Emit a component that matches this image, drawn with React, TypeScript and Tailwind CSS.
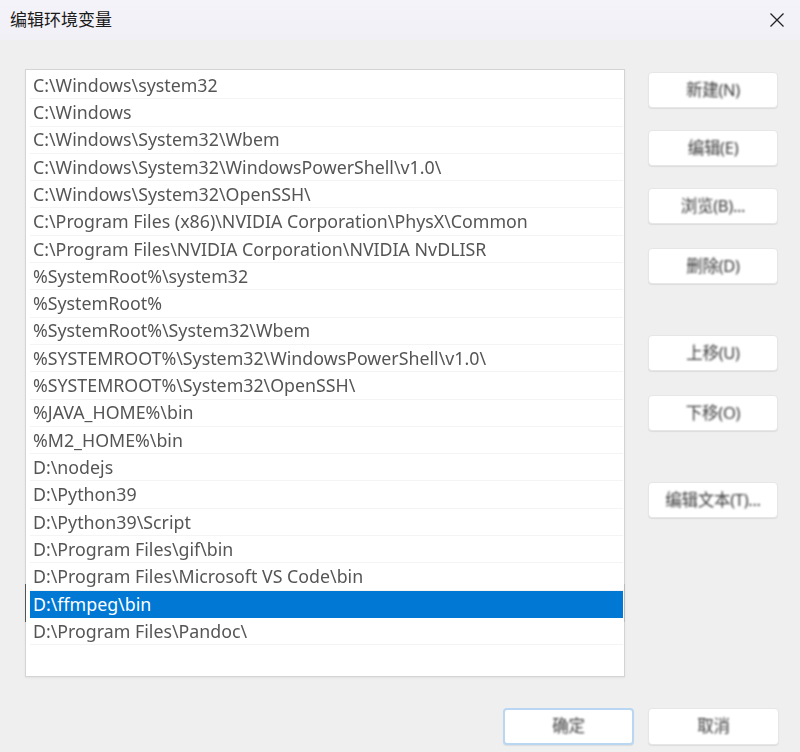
import React from 'react';

const paths = [
  'C:\\Windows\\system32',
  'C:\\Windows',
  'C:\\Windows\\System32\\Wbem',
  'C:\\Windows\\System32\\WindowsPowerShell\\v1.0\\',
  'C:\\Windows\\System32\\OpenSSH\\',
  'C:\\Program Files (x86)\\NVIDIA Corporation\\PhysX\\Common',
  'C:\\Program Files\\NVIDIA Corporation\\NVIDIA NvDLISR',
  '%SystemRoot%\\system32',
  '%SystemRoot%',
  '%SystemRoot%\\System32\\Wbem',
  '%SYSTEMROOT%\\System32\\WindowsPowerShell\\v1.0\\',
  '%SYSTEMROOT%\\System32\\OpenSSH\\',
  '%JAVA_HOME%\\bin',
  '%M2_HOME%\\bin',
  'D:\\nodejs',
  'D:\\Python39',
  'D:\\Python39\\Script',
  'D:\\Program Files\\gif\\bin',
  'D:\\Program Files\\Microsoft VS Code\\bin',
  'D:\\ffmpeg\\bin',
  'D:\\Program Files\\Pandoc\\',
];

const selected = 19;

const font = { fontFamily: '"Noto Sans", "Noto Sans CJK SC", sans-serif' };

const Btn: React.FC<{ label: string; className?: string; primary?: boolean }> = ({ label, className, primary }) => (
  <div
    className={
      'flex h-[36px] items-center justify-center rounded-[4px] bg-white shadow-[0_1px_1px_rgba(0,0,0,0.08)] ' +
      (primary ? 'border-2 border-[#b9d7f2] ' : 'border border-[#e6e6e6] ') +
      (className ?? '')
    }
  >
    <span className="text-[16.5px] tracking-[-0.3px] text-[#3a3a3a] blur-[0.9px]">{label}</span>
  </div>
);

export default function App() {
  return (
    <div className="flex h-[752px] w-[800px] flex-col overflow-hidden bg-[#efefef]" style={font}>
      <div className="flex h-[40px] shrink-0 items-center justify-between bg-gradient-to-b from-[#f4f3fa] to-[#f1f0f6] pl-[10px] pr-[12px]">
        <span className="text-[17px] text-[#1a1a1a]">编辑环境变量</span>
        <svg width="16" height="16" viewBox="0 0 16 16" className="mr-[3px]">
          <path d="M1.5 1.5 L14.5 14.5 M14.5 1.5 L1.5 14.5" stroke="#222" strokeWidth="1.3" fill="none" />
        </svg>
      </div>

      <div className="flex pl-[25px] pt-[29px]">
        <div className="h-[608px] w-[600px] border border-[#d4d4d4] bg-white pl-[4px] pr-[1px] pt-[2px] shadow-[0_1px_2px_rgba(0,0,0,0.06)]">
          {paths.map((p, i) =>
            i === selected ? (
              <div key={p} className="relative flex h-[27.3px] items-center bg-[#0078d4] pl-[3px]">
                <span className="absolute left-[-5px] top-[-7px] h-[38px] w-[1px] bg-[#555]" />
                <span className="absolute right-[-2px] top-[-7px] h-[38px] w-[1px] bg-[#bbb]" />
                <span className="text-[17.8px] text-white">{p}</span>
              </div>
            ) : (
              <div key={p} className="flex h-[27.3px] items-center border-b border-[#f4f4f4] pl-[3px]">
                <span className="whitespace-nowrap text-[17.8px] text-[#555] blur-[0.7px]">{p}</span>
              </div>
            )
          )}
        </div>

        <div className="ml-[23px] flex w-[130px] flex-col pt-[3px]">
          <Btn label="新建(N)" />
          <Btn label="编辑(E)" className="mt-[22px]" />
          <Btn label="浏览(B)..." className="mt-[22px]" />
          <Btn label="删除(D)" className="mt-[24px]" />
          <Btn label="上移(U)" className="mt-[51px]" />
          <Btn label="下移(O)" className="mt-[24px]" />
          <Btn label="编辑文本(T)..." className="mt-[51px]" />
        </div>
      </div>

      <div className="mt-[31px] flex justify-end gap-[14px] pr-[21px]">
        <Btn label="确定" primary className="w-[131px] h-[37px]" />
        <Btn label="取消" className="w-[131px] h-[37px]" />
      </div>
    </div>
  );
}
